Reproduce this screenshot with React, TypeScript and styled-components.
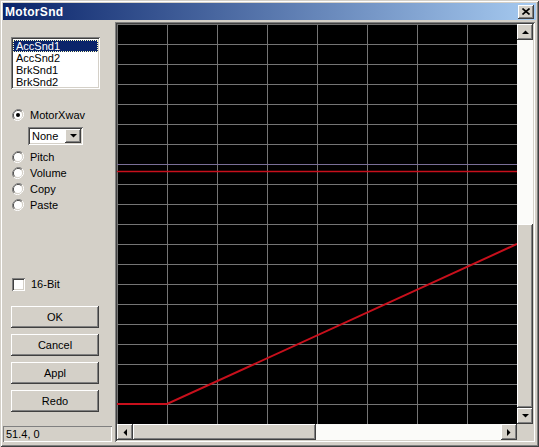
import * as React from 'react';
import styled, { createGlobalStyle, css } from 'styled-components';

const GlobalStyle = createGlobalStyle`
  html, body {
    margin: 0;
    padding: 0;
    background: #d4d0c8;
  }
  body {
    font-family: "Liberation Sans", Arial, sans-serif;
    font-size: 11px;
    color: #000;
  }
`;

const raised = css`
  background: #d4d0c8;
  box-shadow: inset -1px -1px #404040, inset 1px 1px #ffffff,
    inset -2px -2px #808080, inset 2px 2px #d4d0c8;
`;

const sunken = css`
  box-shadow: inset 1px 1px #808080, inset -1px -1px #ffffff,
    inset 2px 2px #404040, inset -2px -2px #d4d0c8;
`;

const Window = styled.div`
  width: 539px;
  height: 447px;
  box-sizing: border-box;
  padding: 3px;
  background: #d4d0c8;
  box-shadow: inset 1px 1px #d4d0c8, inset -1px -1px #404040,
    inset 2px 2px #ffffff, inset -2px -2px #808080;
  display: flex;
  flex-direction: column;
  overflow: hidden;
`;

const TitleBar = styled.div`
  height: 17px;
  display: flex;
  align-items: center;
  justify-content: space-between;
  padding: 0 2px 0 2px;
  background: linear-gradient(to right, #0a246a, #a6caf0);
`;

const TitleText = styled.span`
  color: #fff;
  font-weight: bold;
  font-size: 12px;
  letter-spacing: 0.3px;
`;

const CloseButton = styled.div`
  ${raised};
  width: 16px;
  height: 14px;
  display: flex;
  align-items: center;
  justify-content: center;
`;

const Body = styled.div`
  flex: 1;
  display: flex;
  min-height: 0;
`;

const LeftPanel = styled.div`
  width: 112px;
  display: flex;
  flex-direction: column;
  padding-left: 8px;
  box-sizing: border-box;
`;

const ListBox = styled.div`
  ${sunken};
  background: #fff;
  margin-top: 17px;
  width: 89px;
  height: 52px;
  box-sizing: border-box;
  padding: 3px 2px 2px 2px;
`;

const ListItem = styled.div<{ $selected?: boolean }>`
  height: 12px;
  line-height: 12px;
  padding-left: 3px;
  box-sizing: border-box;
  ${(p) =>
    p.$selected &&
    css`
      background: #0a246a;
      color: #fff;
      outline: 1px dotted #ffffc0;
      outline-offset: -1px;
    `}
`;

const OptionRow = styled.label<{ $top?: number }>`
  display: flex;
  align-items: center;
  height: 16px;
  margin-top: ${(p) => p.$top ?? 0}px;
  padding-left: 1px;
  gap: 6px;
`;

const DropDown = styled.div`
  ${sunken};
  background: #fff;
  margin: 4px 0 0 17px;
  width: 55px;
  height: 18px;
  box-sizing: border-box;
  display: flex;
  align-items: center;
  justify-content: space-between;
  padding: 2px;
`;

const DropDownText = styled.span`
  padding-left: 2px;
`;

const ArrowButton = styled.div<{ $w?: number; $h?: number }>`
  ${raised};
  width: ${(p) => p.$w ?? 16}px;
  height: ${(p) => p.$h ?? 16}px;
  flex: none;
  display: flex;
  align-items: center;
  justify-content: center;
`;

const CheckBox = styled.span`
  ${sunken};
  background: #fff;
  width: 13px;
  height: 13px;
  flex: none;
`;

const PushButton = styled.div<{ $top: number }>`
  ${raised};
  width: 88px;
  height: 22px;
  margin-top: ${(p) => p.$top}px;
  display: flex;
  align-items: center;
  justify-content: center;
`;

const StatusBox = styled.div`
  margin: auto 0 2px -8px;
  width: 109px;
  height: 16px;
  box-sizing: border-box;
  box-shadow: inset 1px 1px #808080, inset -1px -1px #ffffff;
  padding-left: 3px;
  display: flex;
  align-items: center;
`;

const GraphFrame = styled.div`
  ${sunken};
  margin-top: 2px;
  width: 420px;
  height: 420px;
  box-sizing: border-box;
  padding: 2px;
  display: grid;
  grid-template-columns: 400px 16px;
  grid-template-rows: 400px 16px;
`;

const Plot = styled.svg`
  display: block;
  background: #000;
`;

const ScrollBar = styled.div<{ $vertical?: boolean }>`
  display: flex;
  flex-direction: ${(p) => (p.$vertical ? 'column' : 'row')};
  background: #fbfbf9;
`;

const Track = styled.div`
  flex: 1;
`;

const Thumb = styled.div<{ $vertical?: boolean; $size: number }>`
  ${raised};
  flex: none;
  ${(p) =>
    p.$vertical
      ? css`
          height: ${p.$size}px;
        `
      : css`
          width: ${p.$size}px;
        `}
`;

const Corner = styled.div`
  background: #d4d0c8;
`;

const Radio: React.FC<{ checked?: boolean }> = ({ checked }) => (
  <svg width="12" height="12" viewBox="0 0 12 12">
    <path d="M10.2 1.8 A6 6 0 0 0 1.8 10.2" fill="none" stroke="#808080" strokeWidth="1" />
    <path d="M1.8 10.2 A6 6 0 0 0 10.2 1.8" fill="none" stroke="#ffffff" strokeWidth="1" />
    <path d="M9.5 2.5 A5 5 0 0 0 2.5 9.5" fill="none" stroke="#404040" strokeWidth="1" />
    <path d="M2.5 9.5 A5 5 0 0 0 9.5 2.5" fill="none" stroke="#d4d0c8" strokeWidth="1" />
    <circle cx="6" cy="6" r="4" fill="#fff" />
    {checked && <circle cx="6" cy="6" r="2" fill="#000" />}
  </svg>
);

type Dir = 'up' | 'down' | 'left' | 'right';
const Tri: React.FC<{ dir: Dir }> = ({ dir }) => {
  const pts: Record<Dir, string> = {
    up: '0,4 7,4 3.5,0.5',
    down: '0,0 7,0 3.5,3.5',
    left: '4,0 4,7 0.5,3.5',
    right: '0,0 0,7 3.5,3.5',
  };
  const vert = dir === 'up' || dir === 'down';
  return (
    <svg width={vert ? 7 : 4} height={vert ? 4 : 7} viewBox={vert ? '0 0 7 4' : '0 0 4 7'}>
      <polygon points={pts[dir]} fill="#000" />
    </svg>
  );
};

const SOUNDS = ['AccSnd1', 'AccSnd2', 'BrkSnd1', 'BrkSnd2'];
const MODES = ['Pitch', 'Volume', 'Copy', 'Paste'];
const BUTTONS = ['OK', 'Cancel', 'Appl', 'Redo'];

const GRID = '#747474';
const CURVE = '#c8101c';

const Graph: React.FC = () => {
  const cols = Array.from({ length: 8 }, (_, i) => i * 50);
  const rows = Array.from({ length: 20 }, (_, i) => i * 20);
  return (
    <Plot width="400" height="400" viewBox="0 0 400 400">
      {cols.map((x) => (
        <line key={'c' + x} x1={x + 0.5} y1="0" x2={x + 0.5} y2="400" stroke={GRID} strokeWidth="1" />
      ))}
      {rows.map((y) => (
        <line
          key={'r' + y}
          x1="0"
          y1={y + 0.5}
          x2="400"
          y2={y + 0.5}
          stroke={y === 140 ? '#7a6f98' : GRID}
          strokeWidth="1"
        />
      ))}
      <line x1="0" y1="147.5" x2="400" y2="147.5" stroke={CURVE} strokeWidth="1.6" />
      <polyline points="0,380 50,380 400,220" fill="none" stroke={CURVE} strokeWidth="2" />
    </Plot>
  );
};

const App: React.FC = () => {
  return (
    <>
      <GlobalStyle />
      <Window>
        <TitleBar>
          <TitleText>MotorSnd</TitleText>
          <CloseButton>
            <svg width="8" height="7" viewBox="0 0 8 7">
              <path d="M0.5 0.5 L7.5 6.5 M7.5 0.5 L0.5 6.5" stroke="#000" strokeWidth="1.6" />
            </svg>
          </CloseButton>
        </TitleBar>
        <Body>
          <LeftPanel>
            <ListBox>
              {SOUNDS.map((s, i) => (
                <ListItem key={s} $selected={i === 0}>
                  {s}
                </ListItem>
              ))}
            </ListBox>
            <OptionRow $top={18}>
              <Radio checked />
              <span>MotorXwav</span>
            </OptionRow>
            <DropDown>
              <DropDownText>None</DropDownText>
              <ArrowButton $w={16} $h={14}>
                <Tri dir="down" />
              </ArrowButton>
            </DropDown>
            {MODES.map((m, i) => (
              <OptionRow key={m} $top={i === 0 ? 4 : 0}>
                <Radio />
                <span>{m}</span>
              </OptionRow>
            ))}
            <OptionRow $top={63}>
              <CheckBox />
              <span>16-Bit</span>
            </OptionRow>
            {BUTTONS.map((b, i) => (
              <PushButton key={b} $top={i === 0 ? 14 : 6}>
                {b}
              </PushButton>
            ))}
            <StatusBox>51.4, 0</StatusBox>
          </LeftPanel>
          <GraphFrame>
            <Graph />
            <ScrollBar $vertical>
              <ArrowButton>
                <Tri dir="up" />
              </ArrowButton>
              <Track />
              <Thumb $vertical $size={184} />
              <ArrowButton>
                <Tri dir="down" />
              </ArrowButton>
            </ScrollBar>
            <ScrollBar>
              <ArrowButton>
                <Tri dir="left" />
              </ArrowButton>
              <Thumb $size={183} />
              <Track />
              <ArrowButton>
                <Tri dir="right" />
              </ArrowButton>
            </ScrollBar>
            <Corner />
          </GraphFrame>
        </Body>
      </Window>
    </>
  );
};

export default App;
